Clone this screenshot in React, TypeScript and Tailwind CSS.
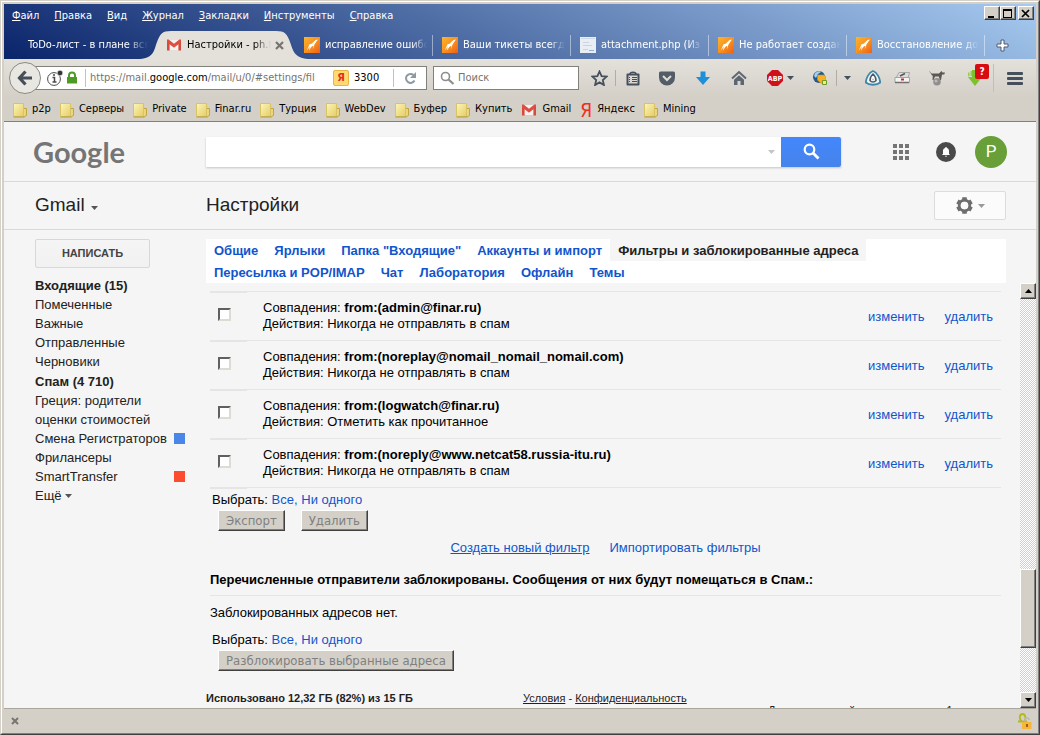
import type { ReactNode } from 'react'
import { clsx } from 'clsx'

const uiFont = "font-['DejaVu_Sans_Condensed','DejaVu_Sans','Noto_Sans',sans-serif] text-[11px]"
const raised =
  'border border-t-white border-l-white border-r-[#404040] border-b-[#404040] bg-[#d4d0c8] shadow-[inset_-1px_-1px_0_#808080]'

const menu = ['Файл', 'Правка', 'Вид', 'Журнал', 'Закладки', 'Инструменты', 'Справка']

const tabs = [
  { title: 'исправление ошибо', icon: 'modx' },
  { title: 'Ваши тикеты всегд', icon: 'modx' },
  { title: 'attachment.php (Из', icon: 'page' },
  { title: 'Не работает создан', icon: 'modx' },
  { title: 'Восстановление до', icon: 'modx' },
]

const bookmarks = [
  { title: 'p2p', icon: 'folder' },
  { title: 'Серверы', icon: 'folder' },
  { title: 'Private', icon: 'folder' },
  { title: 'Finar.ru', icon: 'folder' },
  { title: 'Турция', icon: 'folder' },
  { title: 'WebDev', icon: 'folder' },
  { title: 'Буфер', icon: 'folder' },
  { title: 'Купить', icon: 'folder' },
  { title: 'Gmail', icon: 'gmail' },
  { title: 'Яндекс', icon: 'yandex' },
  { title: 'Mining', icon: 'folder' },
]

const labels = [
  { title: 'Входящие (15)', bold: true },
  { title: 'Помеченные' },
  { title: 'Важные' },
  { title: 'Отправленные' },
  { title: 'Черновики' },
  { title: 'Спам (4 710)', bold: true },
  { title: 'Греция: родители' },
  { title: 'оценки стоимостей' },
  { title: 'Смена Регистраторов', color: 'bg-[#4986e7]' },
  { title: 'Фрилансеры' },
  { title: 'SmartTransfer', color: 'bg-[#fb4c2f]' },
]

const settingsTabs = [
  ['Общие', 'Ярлыки', 'Папка "Входящие"', 'Аккаунты и импорт', 'Фильтры и заблокированные адреса'],
  ['Пересылка и POP/IMAP', 'Чат', 'Лаборатория', 'Офлайн', 'Темы'],
]
const activeSettingsTab = 'Фильтры и заблокированные адреса'

const filters = [
  { match: 'from:(admin@finar.ru)', action: 'Никогда не отправлять в спам' },
  { match: 'from:(noreplay@nomail_nomail_nomail.com)', action: 'Никогда не отправлять в спам' },
  { match: 'from:(logwatch@finar.ru)', action: 'Отметить как прочитанное' },
  { match: 'from:(noreply@www.netcat58.russia-itu.ru)', action: 'Никогда не отправлять в спам' },
]

function GmailIcon() {
  return (
    <svg width="16" height="16" viewBox="0 0 16 16" className="shrink-0">
      <path d="M2 3h12v10H2z" fill="#f4f1f0" />
      <path d="M1 3.400 8 9l7-5.600V13.500h-2.600V7L8 10.600 3.600 7v6.500H1z" fill="#d54b3d" />
      <path d="M1 2.500h1.600L8 6.800l5.400-4.300H15v2.500l-7 5.400L1 5z" fill="#dd4f42" />
    </svg>
  )
}

function ModxIcon() {
  return (
    <svg width="16" height="16" viewBox="0 0 16 16" className="shrink-0">
      <defs>
        <linearGradient id="modx" x1="0" y1="0" x2="1" y2="1">
          <stop offset="0" stopColor="#fbb52e" />
          <stop offset=".5" stopColor="#f8921e" />
          <stop offset="1" stopColor="#ee5f16" />
        </linearGradient>
      </defs>
      <path d="M0 0h16v16H0z" fill="url(#modx)" />
      <path
        d="M14 2.500 11.500 3 7.600 6.800 5.500 7.200 2.800 13.500 5.800 9.800 4.800 13.800 7.500 9.800 9.300 8.800 8.800 12.500 10.500 7.600 12.500 4.500z"
        fill="#fff"
      />
    </svg>
  )
}

function PageIcon() {
  return (
    <svg width="16" height="16" viewBox="0 0 16 16" className="shrink-0">
      <path d="M0 0h16v16H0z" fill="#e9eef4" />
      <path d="M1 1.500h14" stroke="#cfd8e4" />
      <path d="M3 5.500h6M3 8.500h9M3 12.500h5" stroke="#cbd4df" />
      <path d="M9 13.500h5" stroke="#8fb0d8" />
    </svg>
  )
}

function FolderIcon() {
  return (
    <svg width="14" height="16" viewBox="0 0 14 16" className="shrink-0">
      <defs>
        <linearGradient id="folder" x1="0" y1="0" x2="1" y2="1">
          <stop offset="0" stopColor="#fcf6b8" />
          <stop offset="1" stopColor="#e6cd66" />
        </linearGradient>
      </defs>
      <path d="M9.500 6.500h4v7l-2 1h-2z" fill="#ecd67c" stroke="#c1a640" />
      <path d="M.5 1.500h10v13H.5z" fill="url(#folder)" stroke="#d8c368" />
      <path d="M.5 15h11" stroke="#b49a3a" />
    </svg>
  )
}

function Caret({ className }: { className?: string }) {
  return (
    <svg width="7" height="4" viewBox="0 0 7 4" className={clsx('shrink-0', className)}>
      <path d="M0 0h7L3.500 4z" fill="currentColor" />
    </svg>
  )
}

function MenuBar() {
  return (
    <div className="flex h-[27px] items-start justify-between pr-0.5">
      <nav className="flex gap-[15px] pt-[5px] pl-2 text-white">
        {menu.map((item) => (
          <button key={item} type="button" className="leading-[14px]">
            <span className="underline">{item[0]}</span>
            {item.slice(1)}
          </button>
        ))}
      </nav>
      <div className="flex pt-0.5">
        <button type="button" aria-label="Свернуть" className={clsx(raised, 'h-[14px] w-4')}>
          <svg width="13" height="11" viewBox="0 0 13 11">
            <path d="M3 8h6v2H3z" />
          </svg>
        </button>
        <button type="button" aria-label="Развернуть" className={clsx(raised, 'h-[14px] w-4')}>
          <svg width="13" height="11" viewBox="0 0 13 11">
            <path d="M2 1h9v9H2zM3 3v6h7V3z" fillRule="evenodd" />
          </svg>
        </button>
        <button type="button" aria-label="Закрыть" className={clsx(raised, 'ml-0.5 h-[14px] w-4')}>
          <svg width="13" height="11" viewBox="0 0 13 11">
            <path d="m3 2 7 7m0-7-7 7" stroke="#000" strokeWidth="1.700" />
          </svg>
        </button>
      </div>
    </div>
  )
}

function TabStrip() {
  return (
    <div className="flex h-7 text-white">
      <button
        type="button"
        className="w-[144px] overflow-hidden pl-6 text-left whitespace-nowrap mask-r-from-85%"
      >
        ToDo-лист - в плане вся
      </button>
      <div className="relative h-7 w-[152px] shrink-0">
        <svg width="168" height="28" viewBox="0 0 168 28" className="absolute top-0 -left-2">
          <path d="M0 28c14-1 14-9 17-17S22 0 31 0h105c9 0 11 3 14 11s4 16 18 17z" fill="#e4e1db" />
        </svg>
        <div className="relative flex h-7 items-center pl-[18px] text-black">
          <GmailIcon />
          <button
            type="button"
            className="ml-[5px] w-[84px] overflow-hidden text-left whitespace-nowrap mask-r-from-80%"
          >
            Настройки - ph.f
          </button>
          <button type="button" aria-label="Закрыть вкладку" className="ml-1">
            <svg width="9" height="9" viewBox="0 0 9 9">
              <path d="m1 1 7 7m0-7L1 8" stroke="#77756f" strokeWidth="2.200" />
            </svg>
          </button>
        </div>
      </div>
      {tabs.map(({ title, icon }) => (
        <button key={title} type="button" className="flex w-[138px] items-center gap-[5px] pl-1">
          {icon === 'page' ? <PageIcon /> : <ModxIcon />}
          <span className="min-w-0 flex-1 overflow-hidden text-left whitespace-nowrap mask-r-from-85%">{title}</span>
          <span className="mr-[5px] h-[21px] w-px bg-white/45" />
        </button>
      ))}
      <button type="button" aria-label="Новая вкладка" className="ml-1.5 flex items-center">
        <svg width="13" height="13" viewBox="0 0 13 13">
          <path d="M5 1h3v4h4v3H8v4H5V8H1V5h4z" fill="#fff" stroke="#4c5b73" />
        </svg>
      </button>
    </div>
  )
}

function ToolButton({ label, className, children }: { label: string; className: string; children: ReactNode }) {
  return (
    <button
      type="button"
      aria-label={label}
      className={clsx('flex h-8 shrink-0 items-center justify-center text-[#45505c]', className)}
    >
      {children}
    </button>
  )
}

function NavBar() {
  return (
    <div className="flex h-[38px] items-center bg-linear-to-b from-[#e4e1db] to-[#d4d0c8] pl-[5px]">
      <button
        type="button"
        aria-label="Назад"
        className="z-10 flex size-8 shrink-0 items-center justify-center rounded-full border border-[#8b8983] bg-[#e9e7e2]"
      >
        <svg width="16" height="16" viewBox="0 0 16 16" fill="none" stroke="#454f59" strokeWidth="3.200">
          <path d="M8.500 1.500 2.500 8l6 6.500M3 8h12" />
        </svg>
      </button>
      <div className="-ml-2 flex h-6 min-w-0 flex-1 items-center border border-[#82807a] bg-white pl-[13px]">
        <svg width="17" height="16" viewBox="0 0 17 16" className="shrink-0">
          <circle cx="7" cy="9" r="6.400" fill="none" stroke="#4a4a4a" />
          <path d="M5.500 7.500h2v4M5.500 12h4" fill="none" stroke="#4a4a4a" strokeWidth="1.500" />
          <circle cx="7" cy="5" r="1" fill="#4a4a4a" />
          <circle cx="13" cy="3" r="2.800" fill="#333" stroke="#fff" strokeWidth=".6" />
        </svg>
        <svg width="12" height="14" viewBox="0 0 12 14" className="ml-0.5 shrink-0">
          <path d="M3 7V4.500a3 3 0 0 1 6 0V7" fill="none" stroke="#4d9a26" strokeWidth="2" />
          <path d="M1 6h10v6.500H1z" fill="#4d9a26" />
        </svg>
        <span className="ml-[7px] h-[18px] w-px shrink-0 bg-[#c5c2bb]" />
        <p className="ml-1 min-w-0 flex-1 overflow-hidden whitespace-nowrap text-[#76746f]">
          https://mail.<span className="text-black">google.com</span>/mail/u/0/#settings/fil
        </p>
        <span className="mr-[5px] flex size-4 shrink-0 items-center justify-center rounded-[2px] border border-[#e8b443] bg-[#ffd971] text-[11px] font-bold text-[#e0301e]">
          Я
        </span>
        <span className="w-[39px] text-black">3300</span>
        <span className="h-[18px] w-px shrink-0 bg-[#c5c2bb]" />
        <ToolButton label="Обновить" className="w-8">
          <svg width="13" height="13" viewBox="0 0 13 13">
            <path d="M10.500 8.500a4.500 4.500 0 1 1-1-5.500" fill="none" stroke="#8d99a5" strokeWidth="2" />
            <path d="M12 0v6H6z" fill="#8d99a5" />
          </svg>
        </ToolButton>
      </div>
      <label className="ml-1.5 flex h-6 w-[146px] items-center border border-[#82807a] bg-white pl-1.5">
        <svg width="15" height="14" viewBox="0 0 15 14" className="shrink-0">
          <circle cx="5.500" cy="5.500" r="4" fill="none" stroke="#8d8d8d" strokeWidth="1.600" />
          <path d="m8.500 8.500 5 4.500" stroke="#8d8d8d" strokeWidth="2.200" />
        </svg>
        <input
          type="text"
          aria-label="Поиск"
          placeholder="Поиск"
          className="ml-[3px] w-full min-w-0 outline-none placeholder:text-[#76746f]"
        />
      </label>
      <ToolButton label="В закладки" className="ml-[5px] w-[31px]">
        <svg width="17" height="16" viewBox="0 0 17 16">
          <path
            d="m8.500 1.500 2.100 4.600 5 .5-3.800 3.400 1.100 5-4.400-2.600L4.100 15l1.100-5-3.800-3.400 5-.5z"
            fill="none"
            stroke="#45505c"
            strokeWidth="1.800"
          />
        </svg>
      </ToolButton>
      <span className="h-4 w-px bg-[#b0ada6]" />
      <ToolButton label="Показать закладки" className="w-[33px]">
        <svg width="14" height="15" viewBox="0 0 14 15" fill="none" stroke="#45505c">
          <path d="M1.500 3.500h11v10h-11z" strokeWidth="2" strokeLinejoin="round" />
          <path d="M4 3C4 .5 10 .5 10 3" strokeWidth="1.500" />
          <path d="M3 6.500h1m2 0h5M3 8.500h1m2 0h5M3 10.500h1m2 0h5" />
        </svg>
      </ToolButton>
      <ToolButton label="Pocket" className="w-9">
        <svg width="16" height="15" viewBox="0 0 16 15">
          <path d="M1.500.5h13a1.500 1.500 0 0 1 1.500 1.500v4.500a8 8 0 0 1-16 0V2A1.500 1.500 0 0 1 1.500.5z" fill="#525d68" />
          <path d="m4 5 4 4 4-4" fill="none" stroke="#e0ddd6" strokeWidth="2" />
        </svg>
      </ToolButton>
      <ToolButton label="Загрузки" className="w-9">
        <svg width="14" height="14" viewBox="0 0 14 14">
          <path d="M4.500.5h5V6H14l-7 8-7-8h4.500z" fill="#1e8fd8" />
        </svg>
      </ToolButton>
      <ToolButton label="Домой" className="w-[35px]">
        <svg width="16" height="16" viewBox="0 0 16 16">
          <path d="M1 8.500 8 2l7 6.500" fill="none" stroke="#5d6772" strokeWidth="2" />
          <path d="M3 9.800 8 5.200l5 4.600V15h-3.500v-4h-3v4H3z" fill="#5d6772" />
        </svg>
      </ToolButton>
      <ToolButton label="Adblock Plus" className="w-11 gap-1 pl-1">
        <svg width="16" height="16" viewBox="0 0 16 16">
          <path d="M5 0h6l5 5v6l-5 5H5l-5-5V5z" fill="#d0101b" />
          <text x="8" y="11" fontSize="7" fontWeight="bold" fill="#fff" textAnchor="middle">
            ABP
          </text>
        </svg>
        <Caret />
      </ToolButton>
      <ToolButton label="FoxyProxy" className="w-9 pl-1">
        <svg width="16" height="16" viewBox="0 0 16 16">
          <circle cx="7" cy="7" r="6" fill="#24598f" />
          <path d="M3 3c3-2 5-2 6-1L6 4 4 8 2 6z" fill="#9fd0ee" />
          <path d="M5.500 5H12l1.500 1.500V13H8.500L5.500 10z" fill="#f8b125" stroke="#d58a12" strokeWidth=".6" />
          <path d="M10.500 10.500h4v4h-4z" fill="#f6ec6e" stroke="#6d9a2c" />
        </svg>
      </ToolButton>
      <span className="h-4 w-px bg-[#b0ada6]" />
      <ToolButton label="Меню прокси" className="w-[21px]">
        <Caret />
      </ToolButton>
      <ToolButton label="Щит" className="w-[29px]">
        <svg width="16" height="16" viewBox="0 0 16 16">
          <path
            d="M8 1C12 2.500 15 8 15.200 12.500 12 15.500 4 15.500.8 12.500 1 8 4 2.500 8 1z"
            fill="#eef5f8"
            stroke="#3f87aa"
            strokeWidth="1.800"
          />
          <path d="M8 4c1.800 1.500 3 4 3 6.500-1.500 2-4.500 2-6 0C5 8 6.200 5.500 8 4z" fill="#fff" stroke="#4b5a66" strokeWidth="1.600" />
          <circle cx="8" cy="9.500" r="1" fill="#b9c3cb" />
        </svg>
      </ToolButton>
      <ToolButton label="Диск" className="w-[29px]">
        <svg width="16" height="14" viewBox="0 0 16 14">
          <path d="M5 1.500h10.500L14 7H2z" fill="#dcdcdc" stroke="#9a9a9a" strokeWidth=".8" />
          <path d="m6 5 5-2.500" stroke="#555" strokeWidth="1.500" />
          <path d="M1 6.500h14.500v5H1z" fill="#f4f4f4" stroke="#a5a5a5" />
          <path d="M1 11.500h14" stroke="#6f6f6f" strokeWidth="1.500" />
          <path d="M7 8.500h3" stroke="#d22" strokeWidth="2" />
        </svg>
      </ToolButton>
      <ToolButton label="Расширение" className="w-[41px]">
        <svg width="16" height="16" viewBox="0 0 16 16">
          <path
            d="M0 1.500c1.500-.5 1.500 2 3 2h7L12.500 1l1 1.500H16l-.8 2H13L12 10h-1L9.800 6.500H6L4.500 10h-1l.3-4C2 5 2 2.500 0 1.500z"
            fill="#5a5754"
          />
          <circle cx="8" cy="11.800" r="3.800" fill="#908e8c" />
          <circle cx="7" cy="11" r="1.500" fill="#bdbbb9" />
        </svg>
      </ToolButton>
      <ToolButton label="Скачать" className="relative w-9">
        <svg width="16" height="18" viewBox="0 0 16 18">
          <path d="M5 1h6v7h4l-7 9-7-9h4z" fill="#7cc22c" />
          <path d="M1 7.500V3.500h1.500V7zM3.500 7V2H5v5z" fill="#94cf45" />
        </svg>
        <span className="absolute top-0.5 right-1 flex h-[15px] w-[14px] items-center justify-center rounded-[2px] bg-[#d80a12] text-[10px] font-bold text-white">
          ?
        </span>
      </ToolButton>
      <span className="h-7 w-px bg-[#c2bfb8]" />
      <ToolButton label="Меню" className="w-[42px]">
        <svg width="16" height="13" viewBox="0 0 16 13">
          <path d="M1 1.500h14M1 6.500h14M1 11.500h14" stroke="#45505c" strokeWidth="2.800" strokeLinecap="round" />
        </svg>
      </ToolButton>
    </div>
  )
}

function BookmarksBar() {
  return (
    <div className="flex h-[25px] items-center gap-[9px] border-b border-[#82807a] bg-[#d4d0c8] pt-px pl-[9px]">
      {bookmarks.map(({ title, icon }) => (
        <a key={title} href="#" className="flex items-center gap-[5px] whitespace-nowrap text-black">
          {icon === 'folder' && <FolderIcon />}
          {icon === 'gmail' && <GmailIcon />}
          {icon === 'yandex' && <span className="text-[19px] leading-5 text-[#f22d1d]">Я</span>}
          {title}
        </a>
      ))}
    </div>
  )
}

function GoogleBar() {
  return (
    <header className="flex h-[60px] items-center border-b border-[#d9d9d9] pr-[29px]">
      <a
        href="#"
        className="w-[202px] shrink-0 pl-[29px] font-['Lato',sans-serif] text-[29px] leading-10 font-bold text-[#757575]"
      >
        Google
      </a>
      <form className="flex h-[30px] max-w-[635px] flex-1 shadow-[0_1px_2px_#0003]">
        <input type="text" aria-label="Поиск в почте" className="min-w-0 flex-1 bg-white px-2 outline-none" />
        <span className="flex w-5 items-center justify-center bg-white text-[#c4c4c4]">
          <Caret />
        </span>
        <button
          type="button"
          aria-label="Найти"
          className="flex w-[60px] items-center justify-center rounded-r-[2px] bg-linear-to-b from-[#4387fd] to-[#4683ea]"
        >
          <svg width="17" height="17" viewBox="0 0 17 17" fill="none" stroke="#fff" strokeWidth="2.200">
            <circle cx="6.500" cy="6.500" r="4.800" />
            <path d="m10 10 5.500 5.500" strokeWidth="2.800" />
          </svg>
        </button>
      </form>
      <div className="ml-auto flex items-center">
        <button type="button" aria-label="Приложения">
          <svg width="16" height="16" viewBox="0 0 16 16" fill="#757575">
            <path d="M0 0h4v4H0zM6 0h4v4H6zM12 0h4v4h-4zM0 6h4v4H0zM6 6h4v4H6zM12 6h4v4h-4zM0 12h4v4H0zM6 12h4v4H6zM12 12h4v4h-4z" />
          </svg>
        </button>
        <button type="button" aria-label="Уведомления" className="ml-[27px]">
          <svg width="20" height="20" viewBox="0 0 20 20">
            <circle cx="10" cy="10" r="10" fill="#4a4a4a" />
            <path
              d="M10 5a.9.9 0 0 1 .9.9C12.500 6.400 13 7.500 13 9v2.700l1 1.300H6l1-1.300V9c0-1.500.5-2.600 2.100-3.100A.9.9 0 0 1 10 5zM9 13.800h2a1 1 0 0 1-2 0z"
              fill="#fff"
            />
          </svg>
        </button>
        <button
          type="button"
          className="ml-[19px] size-8 rounded-full bg-[#689f38] font-['Roboto',sans-serif] text-[17px] text-white"
        >
          P
        </button>
      </div>
    </header>
  )
}

function TitleBar() {
  return (
    <div className="flex h-12 items-center border-b border-[#d9d9d9] pr-[30px] text-[19px] text-[#222]">
      <button type="button" className="flex w-[202px] shrink-0 items-center gap-1.5 pl-[31px]">
        Gmail
        <Caret className="mt-1 text-[#555]" />
      </button>
      <h1>Настройки</h1>
      <button
        type="button"
        aria-label="Настройки"
        className="ml-auto flex h-[29px] w-[72px] items-center justify-center gap-[5px] rounded-[2px] border border-[#dcdcdc] bg-[#fbfbfb]"
      >
        <svg width="17" height="17" viewBox="-8.500 -8.500 17 17">
          <circle r="5.200" fill="none" stroke="#6e6e6e" strokeWidth="3" />
          <path
            d="M0-8.200v3M0 8.200v-3M7.100-4.100l-2.600 1.500M-7.100 4.100l2.600-1.500M7.100 4.100 4.500 2.600M-7.100-4.100l2.600 1.500"
            stroke="#6e6e6e"
            strokeWidth="4.600"
          />
          <circle r="3.800" fill="#fbfbfb" />
        </svg>
        <Caret className="text-[#999]" />
      </button>
    </div>
  )
}

function Sidebar() {
  return (
    <aside className="w-[202px] shrink-0 pt-[9px] pl-[31px]">
      <button
        type="button"
        className="mb-2 flex h-[29px] w-[115px] items-center justify-center rounded-[2px] border border-[#d8d8d8] bg-linear-to-b from-[#f5f5f5] to-[#f1f1f1] text-[11px] font-bold text-[#444]"
      >
        НАПИСАТЬ
      </button>
      <ul className="pr-[21px] text-[13px] text-[#222]">
        {labels.map(({ title, bold, color }) => (
          <li
            key={title}
            className={clsx('flex h-[19px] items-center justify-between', bold && 'mt-px font-bold')}
          >
            <a href="#" className="whitespace-nowrap">
              {title}
            </a>
            {color && <span className={clsx('size-[11px]', color)} />}
          </li>
        ))}
        <li>
          <button type="button" className="flex h-[19px] items-center gap-[3px]">
            Ещё
            <Caret className="text-[#555]" />
          </button>
        </li>
      </ul>
    </aside>
  )
}

function SettingsTabs() {
  return (
    <nav className="mt-[9px] mr-[30px] bg-white text-[13px] font-bold text-[#15c]">
      {settingsTabs.map((row) => (
        <div key={row[0]} className="flex">
          {row.map((tab) => (
            <a
              key={tab}
              href="#"
              className={clsx(
                'h-[22px] px-2 leading-6 whitespace-nowrap',
                tab === activeSettingsTab && 'bg-[#f5f5f5] text-[#222]',
              )}
            >
              {tab}
            </a>
          ))}
        </div>
      ))}
    </nav>
  )
}

function SelectLinks() {
  return (
    <p className="pl-0.5 leading-5">
      Выбрать:{' '}
      <a href="#" className="text-[#15c]">
        Все
      </a>
      <span className="text-[#15c]">, </span>
      <a href="#" className="text-[#15c]">
        Ни одного
      </a>
    </p>
  )
}

function GrayButton({ children }: { children: ReactNode }) {
  return (
    <button
      type="button"
      disabled
      className={clsx(
        raised,
        "h-[21px] px-[7px] font-['DejaVu_Sans_Condensed','DejaVu_Sans',sans-serif] text-[13px] leading-[19px] text-[#808080]",
      )}
    >
      {children}
    </button>
  )
}

function FilterTable() {
  return (
    <table className="w-full border-separate border-spacing-0">
      <tbody>
        {filters.map(({ match, action }, i) => (
          <tr key={match} className="h-[49px]">
            <td className="w-[37px] border-t-2 border-[#e5e5e5] pl-2">
              <input
                type="checkbox"
                aria-label={match}
                id={`filter-${i}`}
                className="mb-1 block size-[13px] appearance-none border-2 border-t-[#606060] border-r-[#dedbd4] border-b-[#dedbd4] border-l-[#606060] bg-white"
              />
            </td>
            <td className="border-t border-[#e5e5e5] pl-4 leading-4">
              <label htmlFor={`filter-${i}`}>
                Совпадения: <b>{match}</b>
                <br />
                Действия: {action}
              </label>
            </td>
            <td className="w-px border-t border-[#e5e5e5] pt-0.5 pr-5 text-[#15c]">
              <a href="#">изменить</a>
            </td>
            <td className="w-px border-t border-[#e5e5e5] pt-0.5 pr-2 text-[#15c]">
              <a href="#">удалить</a>
            </td>
          </tr>
        ))}
        <tr>
          <td className="border-t-2 border-[#e5e5e5]" />
          <td colSpan={3} className="border-t border-[#e5e5e5]" />
        </tr>
      </tbody>
    </table>
  )
}

function Scrollbar() {
  return (
    <div className="flex w-4 shrink-0 flex-col bg-[conic-gradient(#fff_25%,#d4d0c8_0_50%,#fff_0_75%,#d4d0c8_0)] bg-[length:2px_2px]">
      <button type="button" aria-label="Вверх" className={clsx(raised, 'flex h-4 items-center justify-center')}>
        <Caret className="rotate-180" />
      </button>
      <span className="grow-[270]" />
      <span className={clsx(raised, 'h-[79px]')} />
      <span className="grow-[44]" />
      <button type="button" aria-label="Вниз" className={clsx(raised, 'flex h-4 items-center justify-center')}>
        <Caret />
      </button>
    </div>
  )
}

function Settings() {
  return (
    <div className="min-w-0 flex-1 overflow-hidden pt-2 pr-[19px] text-[13px] text-black">
      <div className="pl-1">
        <FilterTable />
        <div className="pt-px">
          <SelectLinks />
        </div>
        <div className="flex gap-4 pl-2">
          <GrayButton>Экспорт</GrayButton>
          <GrayButton>Удалить</GrayButton>
        </div>
        <p className="flex justify-center gap-5 pt-[7px] leading-5 text-[#15c]">
          <a href="#" className="underline">
            Создать новый фильтр
          </a>
          <a href="#">Импортировать фильтры</a>
        </p>
        <h2 className="mt-3 border-b border-[#e5e5e5] pb-[5px] leading-5 font-bold">
          Перечисленные отправители заблокированы. Сообщения от них будут помещаться в Спам.:
        </h2>
        <p className="pt-[7px] pb-1.5 leading-5">Заблокированных адресов нет.</p>
        <div className="pt-px">
          <SelectLinks />
        </div>
        <div className="pl-2">
          <GrayButton>Разблокировать выбранные адреса</GrayButton>
        </div>
      </div>
      <footer className="mt-[19px] grid grid-cols-[317px_245px_1fr] text-[11px] leading-4 text-[#222]">
        <b>Использовано 12,32 ГБ (82%) из 15 ГБ</b>
        <p>
          <a href="#" className="underline">
            Условия
          </a>{' '}
          -{' '}
          <a href="#" className="underline">
            Конфиденциальность
          </a>
        </p>
        <p className="pt-3 whitespace-nowrap">Дополнительный аккаунт открыт в 1 месте</p>
      </footer>
    </div>
  )
}

function StatusBar() {
  return (
    <div className="flex h-[25px] shrink-0 items-center justify-between border-t border-[#aaa69e] pr-1 pl-[7px]">
      <button type="button" aria-label="Закрыть панель">
        <svg width="8" height="8" viewBox="0 0 8 8">
          <path d="m1 1 6 6m0-6L1 7" stroke="#77756f" strokeWidth="2" />
        </svg>
      </button>
      <svg width="15" height="17" viewBox="0 0 15 17">
        <path d="M1 8.500h4C1 5 3 1 5.500 1S10 5 7 8.500h3" fill="none" stroke="#b3b81e" strokeWidth="1.800" />
        <path d="M8 8.500V7a2 2 0 0 1 4 0" fill="none" stroke="#b9b9b9" strokeWidth="1.500" />
        <path d="M5 9h9.500v7H5z" fill="#f5b63c" />
        <path d="M9 11h2v3H9z" fill="#a85e12" />
      </svg>
    </div>
  )
}

export default function App() {
  return (
    <div className="h-screen overflow-hidden border border-t-[#d4d0c8] border-r-[#404040] border-b-[#404040] border-l-[#d4d0c8]">
      <div className="flex h-full flex-col border border-t-white border-r-[#808080] border-b-[#808080] border-l-white bg-[#d4d0c8] p-0.5 pb-0">
        <div className={clsx('shrink-0', uiFont)}>
          <div className="bg-[linear-gradient(25deg,#0a246a,#a6caf0)]">
            <MenuBar />
            <TabStrip />
          </div>
          <NavBar />
          <BookmarksBar />
        </div>
        <div className="flex min-h-0 flex-1 flex-col bg-[#f5f5f5] font-['Liberation_Sans',Arial,sans-serif]">
          <GoogleBar />
          <TitleBar />
          <div className="flex min-h-0 flex-1">
            <Sidebar />
            <main className="flex min-w-0 flex-1 flex-col">
              <SettingsTabs />
              <div className="flex min-h-0 flex-1">
                <Settings />
                <Scrollbar />
              </div>
            </main>
          </div>
        </div>
        <StatusBar />
      </div>
    </div>
  )
}
